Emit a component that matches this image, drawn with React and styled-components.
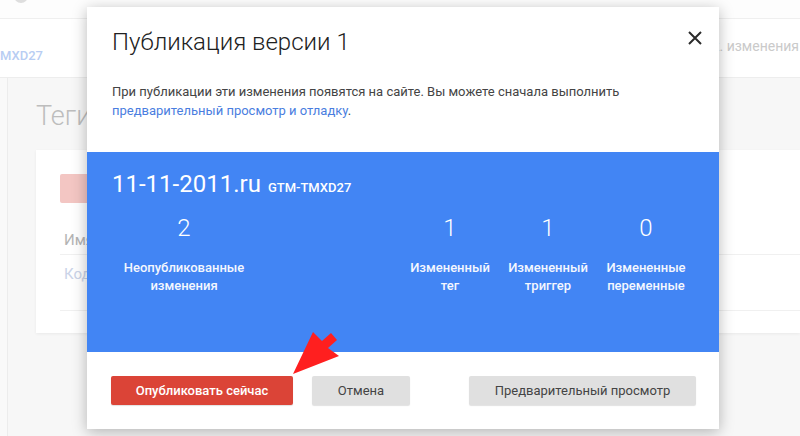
import React from 'react';
import styled, { createGlobalStyle } from 'styled-components';

const GlobalStyle = createGlobalStyle`
  html, body {
    margin: 0;
    padding: 0;
  }
  body {
    font-family: Roboto, "Noto Sans", Arial, sans-serif;
    background: #f7f7f7;
  }
`;

const Page = styled.div`
  position: relative;
  width: 800px;
  height: 436px;
  overflow: hidden;
  display: flex;
  flex-direction: column;
  background: #f7f7f7;
`;

const TopStrip = styled.div`
  position: relative;
  height: 19px;
  background: #fdfdfd;
  border-bottom: 1px solid #efefef;
  box-sizing: border-box;
`;

const Avatar = styled.div`
  position: absolute;
  left: 14px;
  top: -11px;
  width: 14px;
  height: 14px;
  border-radius: 50%;
  background: #dedede;
`;

const Header = styled.div`
  height: 59px;
  background: #fff;
  border-bottom: 1px solid #ededed;
  box-sizing: border-box;
  display: flex;
  justify-content: space-between;
  align-items: flex-start;
`;

const ContainerId = styled.div`
  margin: 29px 0 0 0;
  font-size: 13px;
  font-weight: 500;
  color: #b8cdf3;
`;

const HeaderRight = styled.div`
  margin: 19px 1px 0 0;
  font-size: 14px;
  color: #cacaca;
  white-space: nowrap;
`;

const Body = styled.div`
  flex: 1;
  display: flex;
`;

const Sidebar = styled.div`
  width: 8px;
  background: #f9f9f9;
  border-right: 1px solid #ececec;
  box-sizing: border-box;
`;

const Main = styled.div`
  flex: 1;
  padding: 18px 0 0 28px;
`;

const PageTitle = styled.div`
  font-size: 27px;
  font-weight: 300;
  color: #bdbdbd;
  line-height: 40px;
`;

const Card = styled.div`
  margin-top: 14px;
  height: 183px;
  background: #fff;
  box-shadow: 0 1px 3px rgba(0, 0, 0, 0.06);
  padding: 24px 0 0 24px;
  box-sizing: border-box;
`;

const NewButton = styled.div`
  width: 90px;
  height: 29px;
  border-radius: 2px;
  background: #f3c6c3;
`;

const TableRow = styled.div`
  height: ${({ $h }) => $h}px;
  display: flex;
  align-items: ${({ $top }) => ($top ? 'flex-start' : 'flex-end')};
  padding: ${({ $top }) => ($top ? '10px 0 0 4px' : '0 0 5px 4px')};
  box-sizing: border-box;
  border-bottom: 1px solid #f0f0f0;
  font-size: 15px;
  color: ${({ $muted }) => ($muted ? '#cad3e8' : '#b3b3b3')};
`;

const Dialog = styled.div`
  position: absolute;
  left: 87px;
  top: 7px;
  width: 632px;
  height: 422px;
  background: #fff;
  box-shadow: 0 3px 14px rgba(0, 0, 0, 0.28);
  display: flex;
  flex-direction: column;
`;

const DialogHead = styled.div`
  position: relative;
  padding: 19px 25px 32px;
`;

const DialogTitle = styled.div`
  font-size: 24px;
  font-weight: 300;
  line-height: 32px;
  color: #212121;
`;

const CloseButton = styled.div`
  position: absolute;
  right: 16px;
  top: 23px;
  width: 16px;
  height: 16px;
  display: flex;
`;

const Description = styled.div`
  margin-top: 24px;
  font-size: 13px;
  line-height: 19px;
  color: #444;
`;

const Link = styled.span`
  color: #4a7ee0;
`;

const Summary = styled.div`
  height: 200px;
  background: #4285f4;
  color: #fff;
  padding: 17px 24px 0 25px;
  box-sizing: border-box;
`;

const Domain = styled.div`
  display: flex;
  align-items: baseline;
  gap: 7px;
  line-height: 30px;
`;

const DomainName = styled.span`
  font-size: 24px;
`;

const ContainerTag = styled.span`
  font-size: 13px;
  font-weight: 500;
`;

const Stats = styled.div`
  margin-top: 10px;
  display: flex;
`;

const Stat = styled.div`
  width: ${({ $w }) => $w}px;
  margin-left: ${({ $push }) => ($push ? 'auto' : '0')};
  display: flex;
  flex-direction: column;
  align-items: center;
  text-align: center;
`;

const StatValue = styled.div`
  font-size: 24px;
  font-weight: 300;
  line-height: 30px;
`;

const StatLabel = styled.div`
  margin-top: 16px;
  font-size: 13px;
  font-weight: 500;
  line-height: 18px;
  color: #f4f7fe;
`;

const Footer = styled.div`
  flex: 1;
  display: flex;
  align-items: flex-start;
  padding: 24px 23px 0 24px;
  gap: 19px;
`;

const Button = styled.div`
  width: ${({ $w }) => $w}px;
  height: 29px;
  margin-left: ${({ $push }) => ($push ? 'auto' : '0')};
  border-radius: 2px;
  display: flex;
  align-items: center;
  justify-content: center;
  font-size: 13px;
  font-weight: ${({ $primary }) => ($primary ? 500 : 400)};
  background: ${({ $primary }) => ($primary ? '#db4437' : '#e0e0e0')};
  color: ${({ $primary }) => ($primary ? '#fff' : '#444')};
  box-shadow: 0 1px 1px rgba(0, 0, 0, 0.12);
`;

const Arrow = styled.svg`
  position: absolute;
  left: 0;
  top: 0;
  pointer-events: none;
`;

const stats = [
  { value: 2, label: ['Неопубликованные', 'изменения'], width: 144 },
  { value: 1, label: ['Измененный', 'тег'], width: 98, push: true },
  { value: 1, label: ['Измененный', 'триггер'], width: 98 },
  { value: 0, label: ['Измененные', 'переменные'], width: 98 },
];

const App = () => {
  return (
    <Page>
      <GlobalStyle />
      <TopStrip>
        <Avatar />
      </TopStrip>
      <Header>
        <ContainerId>MXD27</ContainerId>
        <HeaderRight>ик. изменения</HeaderRight>
      </Header>
      <Body>
        <Sidebar />
        <Main>
          <PageTitle>Теги</PageTitle>
          <Card>
            <NewButton />
            <TableRow $h={52}>Имя</TableRow>
            <TableRow $h={56} $muted $top>
              Код
            </TableRow>
          </Card>
        </Main>
      </Body>

      <Dialog>
        <DialogHead>
          <DialogTitle>Публикация версии 1</DialogTitle>
          <CloseButton>
            <svg width="16" height="16" viewBox="0 0 16 16">
              <path d="M2 2 L14 14 M14 2 L2 14" stroke="#2b2b2b" strokeWidth="2" />
            </svg>
          </CloseButton>
          <Description>
            При публикации эти изменения появятся на сайте. Вы можете сначала выполнить
            <br />
            <Link>предварительный просмотр и отладку</Link>.
          </Description>
        </DialogHead>
        <Summary>
          <Domain>
            <DomainName>11-11-2011.ru</DomainName>
            <ContainerTag>GTM-TMXD27</ContainerTag>
          </Domain>
          <Stats>
            {stats.map((s, i) => (
              <Stat key={i} $w={s.width} $push={s.push}>
                <StatValue>{s.value}</StatValue>
                <StatLabel>
                  {s.label[0]}
                  <br />
                  {s.label[1]}
                </StatLabel>
              </Stat>
            ))}
          </Stats>
        </Summary>
        <Footer>
          <Button $w={182} $primary>
            Опубликовать сейчас
          </Button>
          <Button $w={98}>Отмена</Button>
          <Button $w={227} $push>
            Предварительный просмотр
          </Button>
        </Footer>
      </Dialog>

      <Arrow width="800" height="436" viewBox="0 0 800 436">
        <polygon
          points="293,374 313,332 322,341 331,333 337,340 328,348 339,356"
          fill="#ff1f1f"
        />
      </Arrow>
    </Page>
  );
};

export default App;
